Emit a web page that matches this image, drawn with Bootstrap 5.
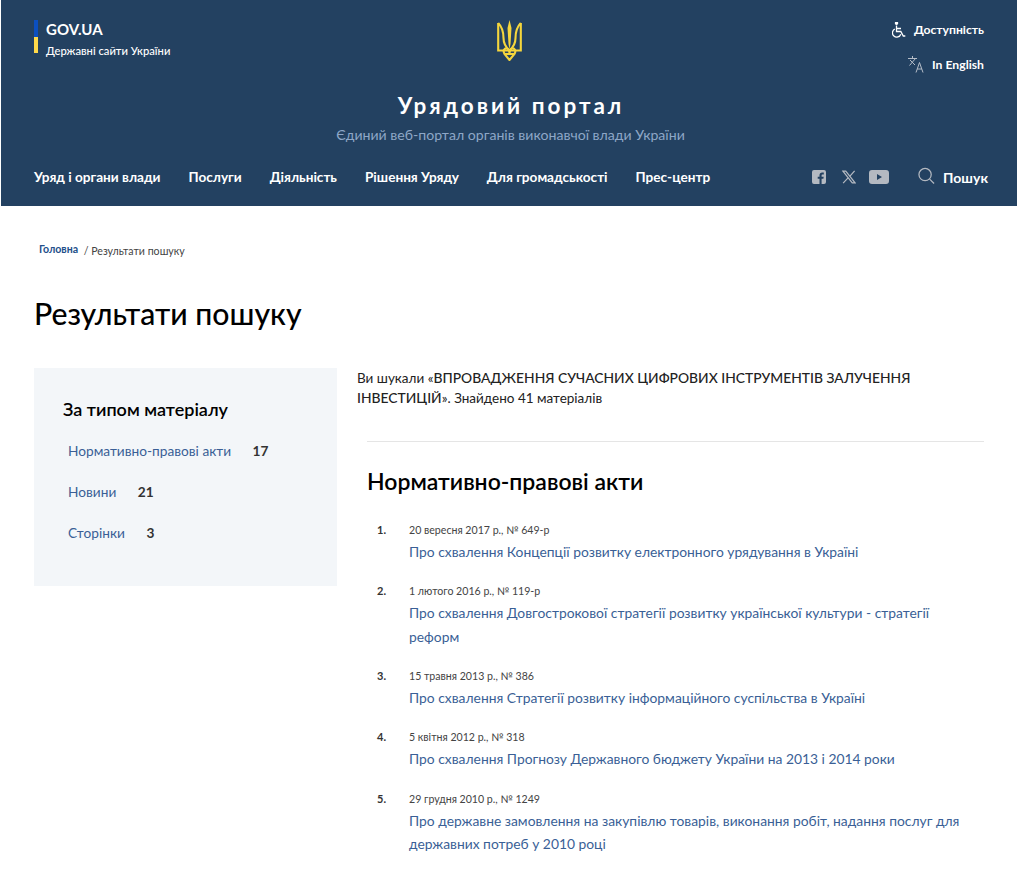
<!DOCTYPE html>
<html lang="en">
<head>
  <meta charset="UTF-8">
  <title>Результати пошуку - Урядовий портал</title>
  <meta name="viewport" content="width=device-width, initial-scale=1">
  <link href="https://cdn.jsdelivr.net/npm/bootstrap@5.3.3/dist/css/bootstrap.min.css" rel="stylesheet">
  <style>
    html, body { height: 874px; overflow: hidden; }
    body {
      padding: 0 1px;
      font-family: Lato, "Noto Sans", sans-serif;
      color: #222;
    }
    .site-head { background: #234161; color: #fff; height: 206px; padding: 19px 33px 0; }
    .top-row { height: 72px; }
    .flag-bar { width: 4px; height: 33px; margin-top: 1px; background: linear-gradient(#0b4fc0 52%, #ffd94a 52%); }
    .gov-name { font-size: 15px; font-weight: 700; line-height: 20px; }
    .gov-sub { font-size: 11.2px; font-weight: 500; line-height: 20px; margin-top: 2px; }
    .trident { position: absolute; left: 496px; top: 20px; }
    .top-links { font-size: 12.2px; font-weight: 700; gap: 14px; }
    .top-links span { line-height: 21px; }
    .portal-title { font-size: 22.5px; font-weight: 700; letter-spacing: 3px; line-height: 30px; text-align: center; padding-left: 4px; }
    .portal-sub { font-size: 14.1px; color: #8ea7c7; line-height: 20px; text-align: center; margin-top: 4px; padding-left: 3px; }
    .main-menu { margin-top: 22px; font-size: 13.6px; font-weight: 700; gap: 28px; }
    .social-links { gap: 13px; margin-right: 1px; margin-top: -2px; }
    .social-links .x-mark { margin-left: 3px; }
    .find-link { font-size: 14px; font-weight: 700; gap: 8px; margin-right: -4px; }
    .find-link svg { margin-top: -4px; }
    .crumbs { font-size: 10.6px; padding: 35px 0 0 5px; line-height: 16px; color: #444; }
    .crumbs b { color: #234f8a; font-weight: 700; margin-right: 3px; vertical-align: 2px; }
    .page-name { font-size: 30.2px; font-weight: 500; margin: 34px 0 35px; line-height: 40px; color: #000; }
    .content-wrap { padding: 0 33px; }
    .filter-box { width: 303px; height: 218px; background: #f3f6f9; padding: 29px 29px; flex: none; }
    .filter-title { font-size: 18px; font-weight: 600; line-height: 24px; margin-bottom: 20px; color: #000; }
    .filter-row { font-size: 13.7px; line-height: 20px; margin: 0 0 21px 5px; color: #3a5f96; }
    .filter-row b { color: #333; font-weight: 700; margin-left: 18px; }
    .results { padding-left: 20px; flex: 1; }
    .query-text { font-size: 13.5px; line-height: 20px; }
    .query-text b { font-weight: 500; font-size: 13.85px; }
    .results hr { margin: 33px 0 23px 10px; border-color: #999; }
    .group-title { font-size: 23px; font-weight: 600; margin: 0 0 22px 10px; line-height: 32px; color: #000; }
    .result-list { list-style: none; margin: 0; padding: 0 0 0 10px; }
    .result-list li { display: flex; margin-bottom: 17.2px; }
    .result-num { width: 42px; flex: none; font-size: 11px; font-weight: 700; padding-left: 10px; color: #333; line-height: 21px; }
    .result-date { font-size: 10.6px; color: #444; line-height: 23px; margin-bottom: -2px; }
    .result-link { font-size: 13.85px; color: #3a5f96; line-height: 23.2px; text-decoration: none; display: block; padding-right: 20px; }
  </style>
</head>
<body>

<header class="site-head position-relative">
  <div class="d-flex justify-content-between top-row">
    <div class="d-flex gap-2">
      <div class="flag-bar"></div>
      <div>
        <div class="gov-name">GOV.UA</div>
        <div class="gov-sub">Державні сайти України</div>
      </div>
    </div>
    <svg class="trident" width="25" height="41" viewBox="0 0 25 41" fill="none" stroke="#f5d63d" stroke-width="2.100">
      <path d="M12.500 0l2 8-1 16-1 5-1-5-1-16z" fill="#f5d63d" stroke="none"/>
      <path d="M1.200 3V30.500H23.800V3"/>
      <path d="M1.200 3C6 8 6.500 14 6.500 18c0 6 2 9 6 12.500c4-3.500 6-6.500 6-12.500c0-4 .5-10 5.300-15"/>
      <path d="M12.500 40l-5-6c-2-3.500 0-6 2.500-5.500c2 .5 2.500 3 2.500 5.500c0-2.500.5-5 2.500-5.500c2.500-.5 4.500 2 2.500 5.500z"/>
      <path d="M8 34H17"/>
    </svg>
    <div class="d-flex flex-column align-items-end top-links">
      <span class="d-flex align-items-center gap-2">
        <svg width="14" height="16" viewBox="0 0 14 16" fill="none" stroke="#fff" stroke-width="1.300"><circle cx="4.500" cy="1.200" r="1.100" fill="#fff"/><path d="M4.500 3.500v6h4.300l2.500 4.500h2M4.500 6.500h4.500"/><path d="M2.800 7a4.300 4.300 0 1 0 6 5.300"/></svg>
        Доступність
      </span>
      <span class="d-flex align-items-center gap-2">
        <svg width="16" height="17" viewBox="0 0 16 17" fill="none" stroke="#b5bdc8" stroke-width="1"><path d="M0 2.500h9M4.500 0v2.500M1.500 9.500 7.500 2.500M2 4l5 5"/><path d="M8 16.500l3.500-10 3.500 10M9.200 13h4.600"/></svg>
        In English
      </span>
    </div>
  </div>
  <div class="portal-title">Урядовий портал</div>
  <div class="portal-sub">Єдиний веб-портал органів виконавчої влади України</div>
  <nav class="d-flex align-items-center main-menu">
    <span>Уряд і органи влади</span>
    <span>Послуги</span>
    <span>Діяльність</span>
    <span>Рішення Уряду</span>
    <span>Для громадськості</span>
    <span>Прес-центр</span>
    <div class="ms-auto d-flex align-items-center social-links">
      <svg width="14" height="14" viewBox="0 0 14 14"><path fill="#b4b9c1" d="M2 0h10a2 2 0 0 1 2 2v10a2 2 0 0 1-2 2H9.600V8.800h1.800l.3-2.100H9.600V5.400c0-.6.2-1 1-1h1.200V2.500c-.3 0-.9-.1-1.600-.1-1.600 0-2.700 1-2.700 2.800v1.500H5.700v2.100h1.800V14H2a2 2 0 0 1-2-2V2a2 2 0 0 1 2-2z"/></svg>
      <svg class="x-mark" width="14" height="14" viewBox="0 0 15 14" fill="none" stroke="#b4b9c1" stroke-width="1.300"><path d="M1 .7h3l10 12.600h-3z"/><path d="M13.500.5 8.300 6.400M6.500 8 1.200 13.500"/></svg>
      <svg width="20" height="14" viewBox="0 0 20 14"><path fill="#b4b9c1" fill-rule="evenodd" d="M3 0h14a3 3 0 0 1 3 3v8a3 3 0 0 1-3 3H3a3 3 0 0 1-3-3V3a3 3 0 0 1 3-3zm5 4v6l5-3z"/></svg>
    </div>
    <div class="d-flex align-items-center find-link">
      <svg width="17" height="18" viewBox="0 0 18 18" fill="none" stroke="#b4b9c1" stroke-width="1.300"><circle cx="7.500" cy="7.500" r="6.500"/><path d="M12.300 12.300 17 17"/></svg>
      Пошук
    </div>
  </nav>
</header>

<main class="content-wrap">
  <div class="crumbs"><b>Головна</b> / Результати пошуку</div>
  <h1 class="page-name">Результати пошуку</h1>
  <div class="d-flex">
    <aside class="filter-box">
      <div class="filter-title">За типом матеріалу</div>
      <div class="filter-row">Нормативно-правові акти <b>17</b></div>
      <div class="filter-row">Новини <b>21</b></div>
      <div class="filter-row">Сторінки <b>3</b></div>
    </aside>
    <section class="results">
      <p class="query-text mb-0">Ви шукали «<b>ВПРОВАДЖЕННЯ СУЧАСНИХ ЦИФРОВИХ ІНСТРУМЕНТІВ ЗАЛУЧЕННЯ ІНВЕСТИЦІЙ</b>». Знайдено 41 матеріалів</p>
      <hr>
      <h2 class="group-title">Нормативно-правові акти</h2>
      <ol class="result-list" id="resultList"></ol>
    </section>
  </div>
</main>

<script>
  const results = [
    ["20 вересня 2017 р., № 649-р", "Про схвалення Концепції розвитку електронного урядування в Україні"],
    ["1 лютого 2016 р., № 119-р", "Про схвалення Довгострокової стратегії розвитку української культури - стратегії реформ"],
    ["15 травня 2013 р., № 386", "Про схвалення Стратегії розвитку інформаційного суспільства в Україні"],
    ["5 квітня 2012 р., № 318", "Про схвалення Прогнозу Державного бюджету України на 2013 і 2014 роки"],
    ["29 грудня 2010 р., № 1249", "Про державне замовлення на закупівлю товарів, виконання робіт, надання послуг для державних потреб у 2010 році"]
  ];
  const list = document.getElementById('resultList');
  results.forEach((item, i) => {
    const li = document.createElement('li');
    li.innerHTML = `<div class="result-num">${i + 1}.</div><div><div class="result-date">${item[0]}</div><a class="result-link" href="#">${item[1]}</a></div>`;
    list.appendChild(li);
  });
</script>
<script src="https://cdn.jsdelivr.net/npm/bootstrap@5.3.3/dist/js/bootstrap.bundle.min.js"></script>
</body>
</html>
